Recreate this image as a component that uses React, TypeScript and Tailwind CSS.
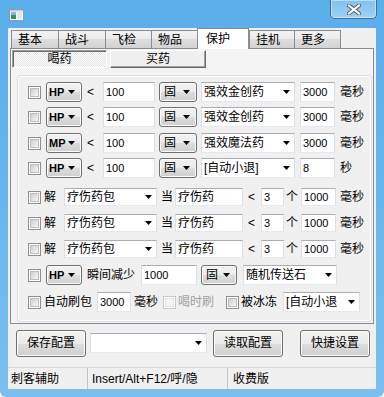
import React from 'react';

const W7_BTN =
  'bg-[linear-gradient(#f2f2f2_0%,#ebebeb_50%,#dddddd_50%,#cfcfcf_100%)] border border-[#707070] rounded-[3px] shadow-[inset_0_0_0_1px_#fbfbfb]';
const EDIT = 'bg-white border border-[#abadb3] border-l-[#dbdfe6] border-r-[#dbdfe6] border-b-[#e3e9ef]';

const Arrow = () => (
  <svg width="7" height="4" viewBox="0 0 7 4" className="shrink-0">
    <path d="M0 0h7L3.5 4z" fill="#000" />
  </svg>
);

const Check = ({ disabled = false, className = '' }: { disabled?: boolean; className?: string }) => (
  <div
    className={`h-[13px] w-[13px] shrink-0 border bg-white p-px ${
      disabled ? 'border-[#c9c9c9]' : 'border-[#8e8f8f]'
    } ${className}`}
  >
    <div
      className={`h-full w-full border ${
        disabled
          ? 'border-[#e3e3e3] bg-[#f5f5f5]'
          : 'border-[#bdbdbd] bg-linear-to-br from-[#cfcfcf] to-[#f7f7f7]'
      }`}
    />
  </div>
);

const BtnCombo = ({ text, className, bold = false }: { text: string; className: string; bold?: boolean }) => (
  <div className={`flex h-[20px] shrink-0 items-center justify-between pr-[6px] ${W7_BTN} ${className}`}>
    <span className={bold ? 'pl-[2px] text-[11px] font-bold' : 'pl-[4px]'}>{text}</span>
    <Arrow />
  </div>
);

const Combo = ({ text, className, h = 'h-[20px]' }: { text: string; className: string; h?: string }) => (
  <div className={`flex shrink-0 items-center justify-between overflow-hidden pl-[2px] pr-[4px] ${h} ${EDIT} ${className}`}>
    <span className="whitespace-nowrap">{text}</span>
    <Arrow />
  </div>
);

const Input = ({ text, className, h = 'h-[20px]', small = false }: { text: string; className: string; h?: string; small?: boolean }) => (
  <div className={`flex shrink-0 items-center pl-[2px] ${h} ${EDIT} ${className}`}>
    <span className={`whitespace-nowrap ${small ? 'text-[11px]' : ''}`}>{text}</span>
  </div>
);

const PotionRow = ({ kind, item, value, unit, className }: { kind: string; item: string; value: string; unit: string; className: string }) => (
  <div className={`flex h-[20px] items-center ${className}`}>
    <Check className="ml-[10px]" />
    <BtnCombo text={kind} bold className="ml-[5px] w-[36px]" />
    <span className="ml-[5px] w-[16px]">&lt;</span>
    <Input text="100" small className="w-[52px]" />
    <BtnCombo text="固" className="ml-[4px] w-[38px]" />
    <Combo text={item} className="ml-[4px] w-[94px]" />
    <Input text={value} small className="ml-[5px] w-[35px]" />
    <span className="ml-[5px]">{unit}</span>
  </div>
);

const CureRow = ({ className }: { className: string }) => (
  <div className={`flex h-[20px] items-center ${className}`}>
    <Check className="ml-[10px]" />
    <span className="ml-[3px] w-[12px]">解</span>
    <Combo text="疗伤药包" h="h-[18px]" className="ml-[8px] w-[93px]" />
    <span className="ml-[4px] w-[12px]">当</span>
    <Input text="疗伤药" h="h-[18px]" className="ml-[2px] w-[68px]" />
    <span className="ml-[5px] w-[13px]">&lt;</span>
    <Input text="3" small h="h-[18px]" className="w-[23px]" />
    <span className="ml-[2px] w-[12px]">个</span>
    <Input text="1000" small h="h-[18px]" className="ml-[3px] w-[35px]" />
    <span className="ml-[4px]">毫秒</span>
  </div>
);

const TABS = [
  { t: '基本', w: 'w-[48px]' },
  { t: '战斗', w: 'w-[48px]' },
  { t: '飞检', w: 'w-[47px]' },
  { t: '物品', w: 'w-[47px]' },
  { t: '保护', w: 'w-[52px]', active: true },
  { t: '挂机', w: 'w-[46px]' },
  { t: '更多', w: 'w-[47px]' },
];

export default function App() {
  return (
    <div className="flex h-[397px] w-[384px] flex-col overflow-hidden rounded-b-[6px] bg-linear-to-b from-[#5aaeea] via-[#68b5eb] to-[#7bbfee] font-['Liberation_Sans','Noto_Sans_CJK_SC',sans-serif] text-[12px] leading-none text-black">
      {/* title bar */}
      <div className="relative h-[28px] shrink-0">
        <svg width="15" height="12" viewBox="0 0 15 12" className="absolute left-[9px] top-[9px]">
          <rect x="0.5" y="0.5" width="14" height="11" fill="#f4f6f8" stroke="#8d9aa8" />
          <rect x="2" y="3" width="5" height="7" fill="#3f8a6a" />
          <rect x="2" y="3" width="5" height="3" fill="#7fb8d8" />
          <rect x="8" y="3" width="5" height="7" fill="#dfe6ec" />
          <rect x="1" y="1" width="13" height="1.5" fill="#c3ced8" />
        </svg>
        <div className="absolute left-[330px] top-0 flex h-[19px] w-[47px] items-center justify-center rounded-b-[5px] border border-t-0 border-[#3d6f9e] bg-linear-to-b from-[#7fc1ef] to-[#9fd1f3] shadow-[inset_0_0_0_1px_rgba(255,255,255,0.45)]">
          <svg width="14" height="11" viewBox="0 0 14 11">
            <path d="M2 1.5 L12 9.5 M12 1.5 L2 9.5" stroke="#4a5766" strokeWidth="4" strokeLinecap="square" />
            <path d="M2 1.5 L12 9.5 M12 1.5 L2 9.5" stroke="#ffffff" strokeWidth="2.2" strokeLinecap="square" />
          </svg>
        </div>
      </div>

      {/* client */}
      <div className="mx-[8px] flex h-[361px] shrink-0 flex-col bg-[#f0f0f0]">
        {/* tab strip */}
        <div className="flex h-[20px] items-end pl-[3px]">
          {TABS.map((tab) =>
            tab.active ? (
              <div
                key={tab.t}
                className={`relative z-10 -mb-px h-[21px] ${tab.w} border border-b-0 border-[#898c95] bg-white pl-[8px] pt-[4px]`}
              >
                {tab.t}
              </div>
            ) : (
              <div
                key={tab.t}
                className={`-mr-px h-[18px] ${tab.w} border border-b-0 border-[#898c95] bg-[linear-gradient(#f3f3f3_0%,#ebebeb_50%,#dedede_50%,#d2d2d2_100%)] pl-[6px] pt-[3px]`}
              >
                {tab.t}
              </div>
            ),
          )}
        </div>

        {/* tab panel */}
        <div className="ml-[2px] h-[277px] w-[364px] border border-[#898c95] bg-[#f4f4f4] p-px">
          <div className="flex gap-[3px]">
            <div className="flex h-[18px] w-[95px] items-center justify-center border border-b-white border-l-[#a0a0a0] border-r-white border-t-[#a0a0a0] bg-[repeating-conic-gradient(#ffffff_0_25%,#e4e4e4_0_50%)] bg-[length:2px_2px] shadow-[inset_1px_1px_0_#696969]">
              喝药
            </div>
            <div className="flex h-[18px] w-[96px] items-center justify-center border border-b-[#696969] border-l-white border-r-[#696969] border-t-white bg-[#f0f0f0] shadow-[inset_-1px_-1px_0_#a0a0a0]">
              买药
            </div>
          </div>

          {/* group box */}
          <div className="ml-[5px] mt-[7px] flex h-[247px] w-[355px] flex-col rounded-[3px] border border-[#d5dfe5] bg-[#f0f0f0] shadow-[inset_0_0_0_1px_#ffffff]">
            <PotionRow kind="HP" item="强效金创药" value="3000" unit="毫秒" className="mt-[6px]" />
            <PotionRow kind="HP" item="强效金创药" value="3000" unit="毫秒" className="mt-[5px]" />
            <PotionRow kind="MP" item="强效魔法药" value="3000" unit="毫秒" className="mt-[6px]" />
            <PotionRow kind="HP" item="[自动小退]" value="8" unit="秒" className="mt-[5px]" />
            <CureRow className="mt-[9px]" />
            <CureRow className="mt-[6px]" />
            <CureRow className="mt-[6px]" />

            <div className="mt-[6px] flex h-[20px] items-center">
              <Check className="ml-[10px]" />
              <BtnCombo text="HP" bold className="ml-[5px] w-[36px]" />
              <span className="ml-[5px] w-[48px]">瞬间减少</span>
              <Input text="1000" small className="ml-[6px] w-[56px]" />
              <BtnCombo text="固" className="ml-[4px] w-[36px]" />
              <Combo text="随机传送石" className="ml-[6px] w-[94px]" />
            </div>

            <div className="mt-[7px] flex h-[20px] items-center">
              <Check className="ml-[10px]" />
              <span className="ml-[3px] w-[48px]">自动刷包</span>
              <Input text="3000" small className="ml-[5px] w-[34px]" />
              <span className="ml-[3px] w-[24px]">毫秒</span>
              <Check disabled className="ml-[5px]" />
              <span className="ml-[2px] w-[36px] text-[#a0a0a0]">喝时刷</span>
              <Check className="ml-[12px]" />
              <span className="ml-[2px] w-[36px]">被冰冻</span>
              <Combo text="[自动小退" className="ml-[6px] w-[77px]" />
            </div>
          </div>
        </div>

        {/* buttons */}
        <div className="ml-[8px] mt-[5px] flex h-[28px] items-center">
          <div className={`flex h-[27px] w-[70px] items-center justify-center ${W7_BTN}`}>保存配置</div>
          <Combo text="" className="ml-[4px] w-[117px]" />
          <div className={`ml-[6px] flex h-[27px] w-[70px] items-center justify-center ${W7_BTN}`}>读取配置</div>
          <div className={`ml-[17px] flex h-[27px] w-[70px] items-center justify-center ${W7_BTN}`}>快捷设置</div>
        </div>

        {/* status bar */}
        <div className="mt-[10px] flex h-[22px] items-center border-t border-[#d7d7d7] bg-[#f0f0f0]">
          <div className="flex h-full w-[80px] items-center border-r border-[#c5c5c5] pl-[3px]">刺客辅助</div>
          <div className="flex h-full w-[140px] items-center border-r border-[#c5c5c5] pl-[4px]">Insert/Alt+F12/呼/隐</div>
          <div className="flex h-full items-center pl-[5px]">收费版</div>
        </div>
      </div>
    </div>
  );
}
